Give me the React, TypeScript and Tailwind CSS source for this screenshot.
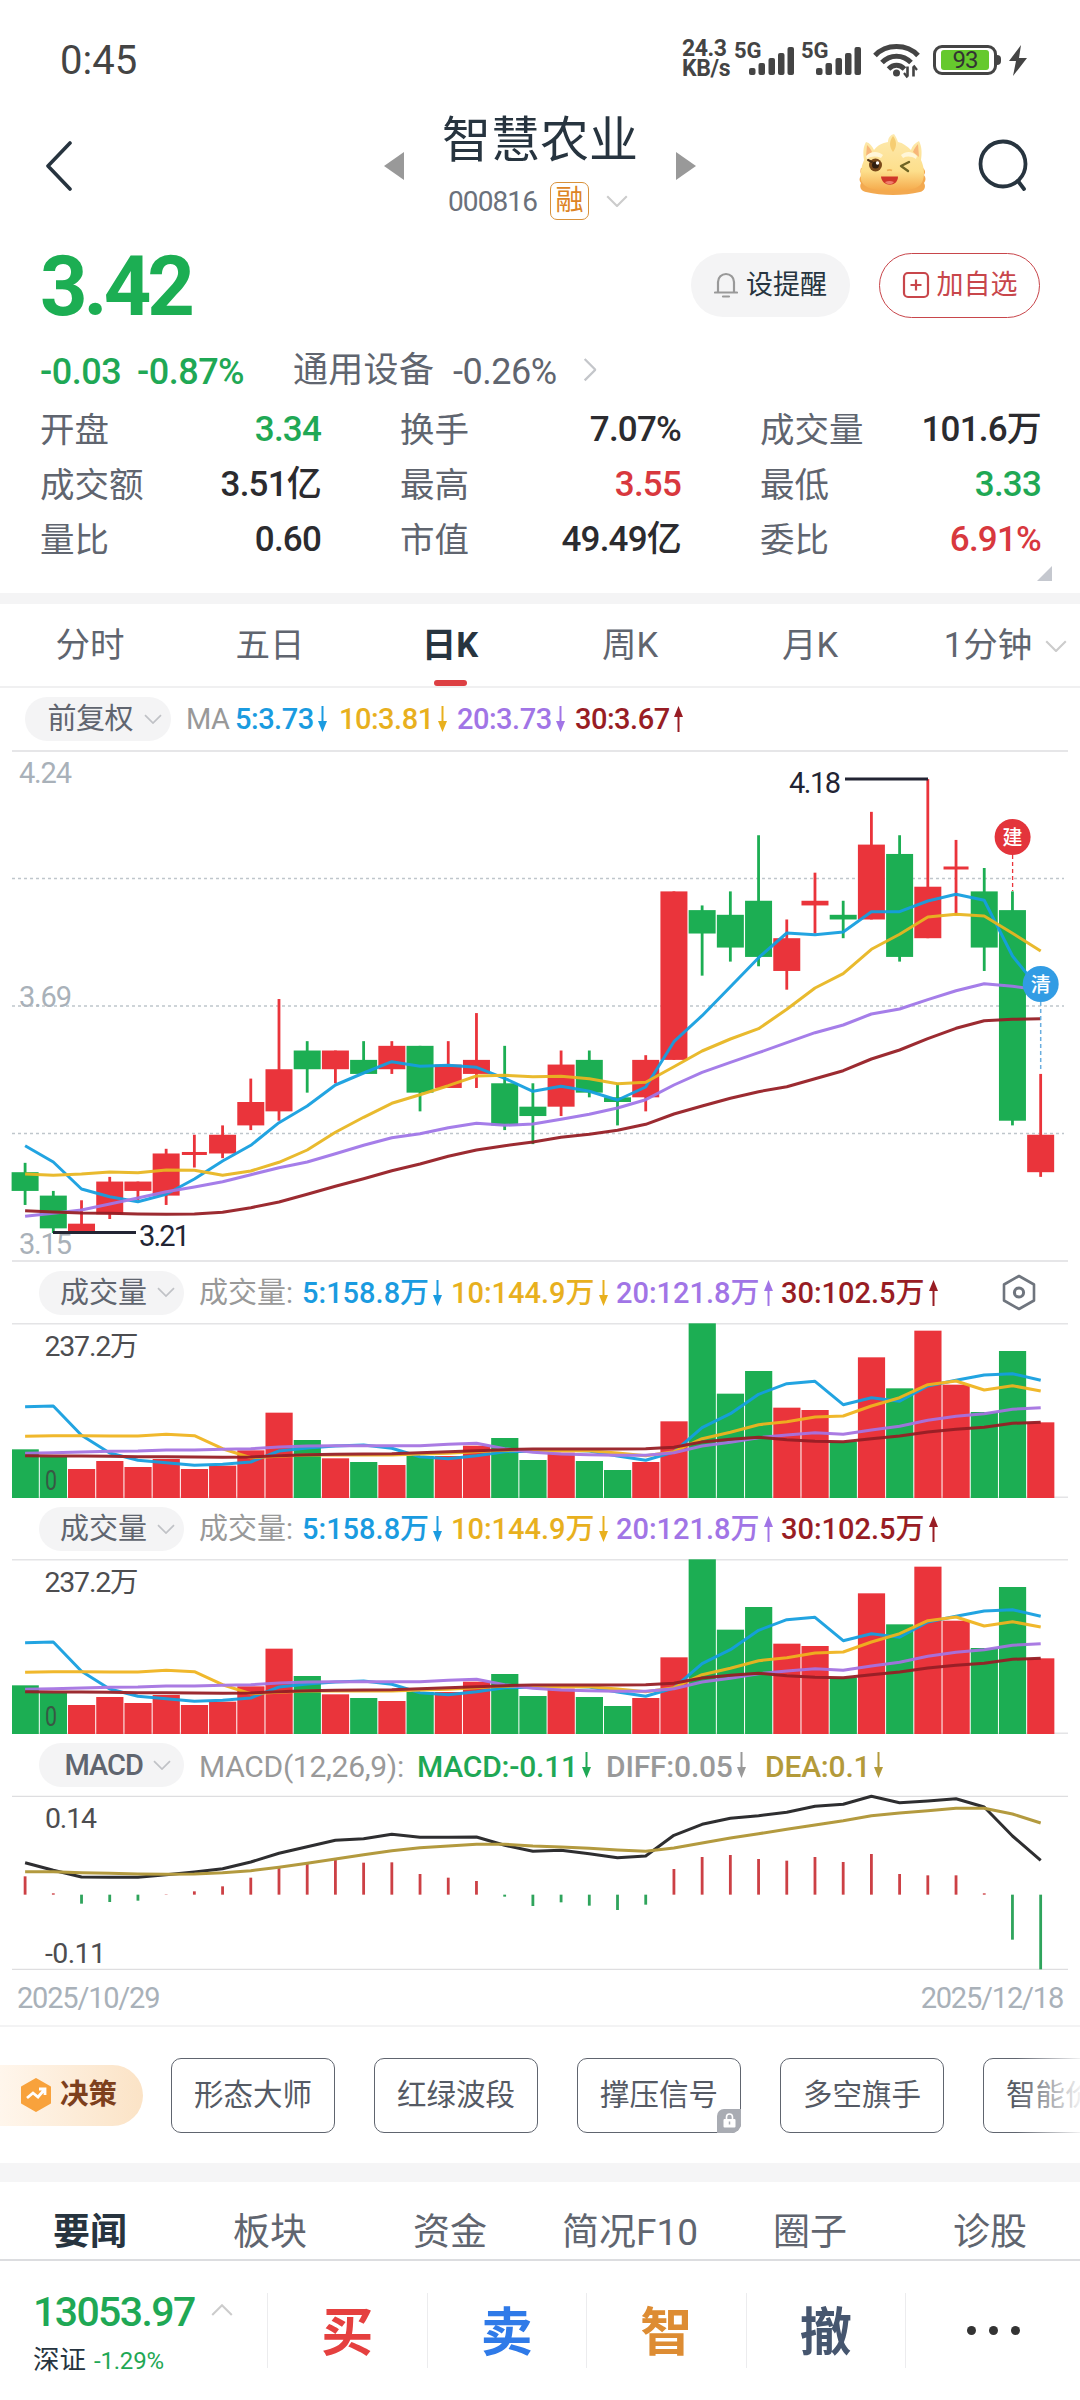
import { FC, ReactNode } from "react";

interface Candle {
  open: number;
  high: number;
  low: number;
  close: number;
}

interface LegendItem {
  text: string;
  dir: "up" | "down";
  className: string;
}

const RED = "#ea343b";
const GREEN = "#1cae53";
const STEP = 28.21;
const BODY = 27;

// x of the middle of the n-th candle, relative to the chart's left edge
const cx = (i: number) => 13.1 + i * STEP;
const toPoints = (ys: number[]) => ys.map((y, i) => `${cx(i).toFixed(1)},${(y / 3).toFixed(1)}`).join(" ");

// open, high, low, close
const rows: number[][] = [
  [3.34, 3.36, 3.27, 3.3],
  [3.29, 3.3, 3.21, 3.22],
  [3.21, 3.28, 3.21, 3.23],
  [3.25, 3.33, 3.24, 3.32],
  [3.3, 3.32, 3.28, 3.32],
  [3.29, 3.39, 3.27, 3.38],
  [3.38, 3.42, 3.35, 3.38],
  [3.38, 3.44, 3.37, 3.42],
  [3.44, 3.54, 3.43, 3.49],
  [3.47, 3.71, 3.45, 3.56],
  [3.6, 3.62, 3.51, 3.56],
  [3.56, 3.6, 3.53, 3.6],
  [3.58, 3.62, 3.55, 3.55],
  [3.56, 3.62, 3.55, 3.61],
  [3.61, 3.61, 3.47, 3.51],
  [3.52, 3.62, 3.52, 3.57],
  [3.55, 3.68, 3.52, 3.58],
  [3.53, 3.61, 3.43, 3.44],
  [3.48, 3.53, 3.4, 3.46],
  [3.48, 3.6, 3.46, 3.57],
  [3.58, 3.6, 3.5, 3.51],
  [3.5, 3.53, 3.44, 3.49],
  [3.5, 3.59, 3.47, 3.58],
  [3.58, 3.94, 3.58, 3.94],
  [3.9, 3.91, 3.76, 3.85],
  [3.89, 3.94, 3.79, 3.82],
  [3.92, 4.06, 3.78, 3.8],
  [3.77, 3.88, 3.73, 3.84],
  [3.91, 3.98, 3.85, 3.92],
  [3.89, 3.92, 3.84, 3.88],
  [3.88, 4.11, 3.88, 4.04],
  [4.02, 4.06, 3.79, 3.8],
  [3.84, 4.18, 3.84, 3.95],
  [3.99, 4.05, 3.89, 3.99],
  [3.94, 3.99, 3.77, 3.82],
  [3.9, 3.94, 3.44, 3.45],
  [3.34, 3.55, 3.33, 3.42],
];
const candles: Candle[] = rows.map(([open, high, low, close]) => ({ open, high, low, close }));
const isUp = (c: Candle) => c.close >= c.open;
const priceY = (p: number) => 1 + (4.24 - p) * 468;

// line series are kept in thirds of a pixel
const ma5 = [1187, 1236, 1317, 1340, 1355, 1333, 1287, 1233, 1186, 1118, 1068, 1005, 969, 935, 949, 946, 952, 985, 1024, 1009, 1024, 1050, 1011, 875, 797, 710, 623, 549, 554, 546, 485, 485, 453, 433, 451, 618, 722];
const ma10 = [1272, 1276, 1272, 1266, 1268, 1260, 1261, 1276, 1263, 1237, 1200, 1147, 1102, 1060, 1034, 1007, 978, 976, 980, 979, 986, 1001, 997, 950, 903, 867, 836, 778, 714, 671, 598, 553, 501, 493, 498, 550, 603];
const ma20 = [1399, 1390, 1380, 1362, 1344, 1325, 1311, 1295, 1274, 1253, 1236, 1211, 1186, 1163, 1151, 1133, 1120, 1126, 1122, 1108, 1093, 1074, 1049, 1005, 967, 937, 908, 878, 848, 825, 792, 777, 749, 722, 701, 709, 720];
const ma30 = [1382, 1386, 1389, 1390, 1392, 1393, 1392, 1387, 1373, 1356, 1333, 1309, 1286, 1262, 1242, 1219, 1200, 1187, 1176, 1162, 1153, 1141, 1123, 1092, 1068, 1045, 1025, 1010, 986, 962, 927, 900, 866, 835, 812, 808, 806];

const volTop = [598, 621, 657, 633, 651, 627, 657, 647, 601, 488, 570, 625, 636, 645, 618, 618, 587, 564, 630, 608, 633, 660, 636, 514, 220, 431, 363, 473, 480, 575, 322, 415, 242, 404, 486, 303, 517];
const vol5 = [470, 468, 556, 609, 631, 638, 646, 643, 636, 603, 594, 588, 585, 595, 620, 626, 617, 605, 604, 600, 603, 618, 631, 606, 533, 491, 433, 401, 394, 464, 443, 454, 408, 391, 375, 371, 391];
const vol10 = [559, 557, 557, 558, 558, 553, 557, 596, 623, 619, 615, 615, 615, 615, 612, 610, 605, 600, 603, 602, 602, 609, 617, 605, 566, 547, 524, 515, 501, 498, 468, 443, 404, 393, 420, 407, 423];
const vol20 = [610, 608, 606, 604, 603, 600, 600, 598, 596, 591, 588, 587, 587, 587, 587, 583, 580, 596, 607, 612, 614, 616, 616, 608, 588, 577, 563, 555, 548, 553, 540, 529, 511, 499, 491, 478, 473];
const vol30 = [617, 618, 618, 619, 620, 620, 621, 622, 621, 617, 614, 613, 612, 611, 608, 605, 602, 599, 597, 597, 597, 597, 596, 592, 576, 568, 562, 569, 574, 575, 566, 558, 546, 538, 532, 520, 517];

const macd = [409, 460, 491, 486, 482, 463, 454, 439, 413, 384, 372, 358, 368, 367, 402, 413, 423, 470, 498, 487, 497, 510, 494, 387, 351, 345, 357, 362, 351, 366, 342, 402, 406, 406, 460, 599, 688];
const diff = [368, 391, 411, 412, 412, 404, 396, 386, 366, 340, 320, 301, 296, 283, 292, 292, 291, 316, 334, 331, 341, 353, 348, 286, 253, 235, 227, 217, 199, 193, 169, 188, 183, 176, 201, 288, 361];
const dea = [395, 395, 398, 400, 402, 403, 402, 398, 392, 382, 370, 357, 344, 332, 323, 318, 313, 313, 318, 321, 325, 330, 334, 324, 309, 294, 281, 268, 255, 242, 227, 219, 212, 205, 205, 222, 249];

const stats = [
  { label: "开盘", value: "3.34", color: "text-[#1fa855]" },
  { label: "换手", value: "7.07%", color: "text-[#2b2b2f]" },
  { label: "成交量", value: "101.6万", color: "text-[#2b2b2f]" },
  { label: "成交额", value: "3.51亿", color: "text-[#2b2b2f]" },
  { label: "最高", value: "3.55", color: "text-[#d8383e]" },
  { label: "最低", value: "3.33", color: "text-[#1fa855]" },
  { label: "量比", value: "0.60", color: "text-[#2b2b2f]" },
  { label: "市值", value: "49.49亿", color: "text-[#2b2b2f]" },
  { label: "委比", value: "6.91%", color: "text-[#d8383e]" },
];

const maLegend: LegendItem[] = [
  { text: "5:3.73", dir: "down", className: "w-[104px] text-[#1a9be0]" },
  { text: "10:3.81", dir: "down", className: "w-[118px] text-[#e8b01e]" },
  { text: "20:3.73", dir: "down", className: "w-[118px] text-[#a175e6]" },
  { text: "30:3.67", dir: "up", className: "text-[#981d24]" },
];

const volLegend: LegendItem[] = [
  { text: "5:158.8万", dir: "down", className: "w-[149px] text-[#1a9be0]" },
  { text: "10:144.9万", dir: "down", className: "w-[165px] text-[#e8b01e]" },
  { text: "20:121.8万", dir: "up", className: "w-[165px] text-[#a175e6]" },
  { text: "30:102.5万", dir: "up", className: "text-[#981d24]" },
];

const macdLegend: LegendItem[] = [
  { text: "MACD:-0.11", dir: "down", className: "w-[189px] text-[#1fa855]" },
  { text: "DIFF:0.05", dir: "down", className: "w-[159px] text-[#999999]" },
  { text: "DEA:0.1", dir: "down", className: "text-[#b39a3a]" },
];

const Chevron: FC<{ className?: string; up?: boolean; w?: number }> = ({ className = "", up, w = 18 }) => (
  <svg width={w} height={w * 0.56} viewBox="0 0 18 10" fill="none" className={className}>
    <path d={up ? "M1 9 9 1l8 8" : "M1 1l8 8 8-8"} stroke="currentColor" strokeWidth="1.7" />
  </svg>
);

const Arrow: FC<{ dir: "up" | "down" }> = ({ dir }) => (
  <svg width="9" height="26" viewBox="0 0 9 26" className={`-mt-[2px] ${dir === "up" ? "" : "rotate-180"}`}>
    <path d="M4.5 0 9 11H0z" fill="currentColor" />
    <path d="M4.5 8v18" stroke="currentColor" strokeWidth="2" />
  </svg>
);

const Legend: FC<{ items: LegendItem[] }> = ({ items }) => (
  <>
    {items.map((item) => (
      <span key={item.text} className={`flex shrink-0 items-center gap-1 pt-[2px] font-medium ${item.className}`}>
        {item.text}
        <Arrow dir={item.dir} />
      </span>
    ))}
  </>
);

const Line: FC<{ ys: number[]; color: string }> = ({ ys, color }) => (
  <polyline points={toPoints(ys)} fill="none" stroke={color} strokeWidth="3" strokeLinejoin="round" />
);

const SignalBars = () => (
  <svg width="46" height="28" viewBox="0 0 46 28" fill="#444">
    <rect x="0" y="21" width="6.500" height="7" rx="2" />
    <rect x="9.500" y="16" width="6.500" height="12" rx="2" />
    <rect x="19.500" y="11" width="6.500" height="17" rx="2" />
    <rect x="29" y="6" width="6.500" height="22" rx="2" />
    <rect x="38.500" y="0" width="6.500" height="28" rx="2" />
  </svg>
);

const StatusBar = () => (
  <div className="flex h-[100px] items-start text-[#444]">
    <div className="ml-[60px] mt-[38px] text-[40px] leading-[46px]">0:45</div>
    <div className="ml-auto mt-[40px] flex w-[52px] flex-col gap-[2px] text-[23px] font-bold leading-[18px] tracking-[-0.4px]">
      <span>24.3</span>
      <span>KB/s</span>
    </div>
    {[0, 1].map((n) => (
      <div key={n} className="mt-[40px] flex h-[35px] w-[67px] items-end">
        <span className="self-start text-[22px] font-bold leading-[22px]">5G</span>
        <div className="-ml-[13px] shrink-0">
          <SignalBars />
        </div>
      </div>
    ))}
    <svg width="47" height="36" viewBox="0 0 47 36" fill="none" className="ml-[5px] mt-[43px]" stroke="#444" strokeWidth="5">
      <path d="M2 12.500C13 .5 34 .5 45 12.500" />
      <path d="M9 19.500c8-8.500 21-8.500 29 0" />
      <path d="M15.500 26c5-5 11-5 16 0" />
      <circle cx="23.500" cy="30" r="3.500" fill="#444" stroke="none" />
      <path d="M34.500 33.500v-10m6 0v10" strokeWidth="2.600" />
      <path d="M31 30l3.500 4.500M44 27l-3.500-4.500" strokeWidth="2.200" />
    </svg>
    <div className="ml-[13px] mt-[45px] flex h-[30px] w-[64px] items-center justify-center rounded-[9px] border-[3px] border-[#444] p-[2px]">
      <div className="flex h-full w-[48px] items-center justify-center rounded-[3px] bg-[#66c92d] text-[24px] leading-none tracking-[-1px] text-[#333]">93</div>
    </div>
    <div className="mt-[55px] h-[10px] w-[4px] rounded-r bg-[#444]" />
    <svg width="18" height="31" viewBox="0 0 18 31" className="ml-[8px] mr-[53px] mt-[45px]" fill="#444">
      <path d="M12 0 0 16h7L4 31l14-18h-8z" />
    </svg>
  </div>
);

const Mascot = () => (
  <svg width="67" height="62" viewBox="0 0 67 62">
    <defs>
      <linearGradient id="fur" x1="0" y1="0" x2="0" y2="1">
        <stop offset="0" stopColor="#fdeab0" />
        <stop offset="0.65" stopColor="#fddf8c" />
        <stop offset="1" stopColor="#f5a94a" />
      </linearGradient>
    </defs>
    <path d="M2 34c-1 3-1 5 1 7-3 3-3 5-1 8-2 4 0 8 5 9 16 4 38 4 54 0 5-1 6-6 4-9 2-3 2-5 0-8 2-3 1-5-1-7z" fill="#f3a94f" />
    <path d="M5 26C4 19 4 13 7 8c4 1 6 4 8 8 4-5 8-7 14-8 0-4 2-7 6-8 2 3 3 5 4 8 5 1 9 4 13 8 1-4 4-7 8-9 3 6 3 12 2 19 3 7 4 14 2 20-2 7-9 11-30 11S4 53 2 46c-1-6 0-13 3-20z" fill="url(#fur)" />
    <path d="M8 11c2 2 4 4 5 7l-6 5zM59 10c-2 2-4 5-5 8l6 5z" fill="#f7b679" />
    <path d="M34 2c4 5 4 11 0 16-4-5-4-11 0-16z" fill="#f6cd72" />
    <path d="M7 22c5-5 12-5 17-1l-2 3c-5-2-10-2-14 1zM42 21c5-4 11-4 16 1l-1 3c-5-3-9-3-13-1z" fill="#fff6d8" />
    <ellipse cx="16.500" cy="31" rx="6.500" ry="6.500" fill="#7a4a1b" />
    <circle cx="16.500" cy="31" r="3.500" fill="#2f1d10" />
    <circle cx="18.500" cy="29" r="1.700" fill="#fff" />
    <path d="M9 26l4 2" stroke="#4b2e14" strokeWidth="2" strokeLinecap="round" />
    <path d="m50 28-8 4 7 5" fill="none" stroke="#6f6424" strokeWidth="2.400" strokeLinecap="round" strokeLinejoin="round" />
    <path d="M22 42.500h17c0 11-16 11-17 0z" fill="#cf3629" />
    <path d="M26 48c3-1.500 6-1.500 9 0-2 3-7 3-9 0z" fill="#ef7f6b" />
    <path d="M28 36.500c2-1 3-1 5 0" stroke="#eeb25a" strokeWidth="1.600" fill="none" />
  </svg>
);

const Header = () => (
  <div className="grid h-[140px] grid-cols-[1fr_auto_1fr]">
    <svg width="28" height="50" viewBox="0 0 28 50" className="ml-[45px] mt-[41px]" fill="none">
      <path d="M25 2 3 25l22 23" stroke="#27343f" strokeWidth="3.600" strokeLinecap="round" strokeLinejoin="round" />
    </svg>
    <div className="flex gap-[38px]">
      <svg width="20" height="28" viewBox="0 0 20 28" className="mt-[52px]">
        <path d="M20 0v28L0 14z" fill="#999" />
      </svg>
      <div className="flex w-[196px] flex-col items-center">
        <h1 className="mt-[11px] whitespace-nowrap text-[49px] leading-[60px] text-[#27343f]">智慧农业</h1>
        <div className="mt-[11px] flex h-[38px] items-center self-start pl-[6px]">
          <span className="w-[89px] pt-[2px] text-[28px] tracking-[-0.9px] text-[#6b717b]">000816</span>
          <span className="ml-[13px] flex h-[38px] w-[39px] items-center justify-center rounded-[7px] border-[1.5px] border-[#d9913a] text-[28px] leading-none text-[#dd8424]">融</span>
          <Chevron w={22} className="ml-[17px] shrink-0 text-[#ccc]" />
        </div>
      </div>
      <svg width="20" height="28" viewBox="0 0 20 28" className="mt-[52px]">
        <path d="M0 0v28l20-14z" fill="#999" />
      </svg>
    </div>
    <div className="flex justify-end gap-[52px] pr-[52px]">
      <div className="mt-[34px]">
        <Mascot />
      </div>
      <svg width="50" height="54" viewBox="0 0 50 54" className="mt-[39px]" fill="none" stroke="#27343f" strokeWidth="3.800" strokeLinecap="round">
        <circle cx="25" cy="25" r="22.500" />
        <path d="m40 42 6 8" />
      </svg>
    </div>
  </div>
);

const Quote = () => (
  <section className="px-10">
    <div className="flex h-[90px] items-center">
      <span className="mr-auto pt-[3px] text-[83px] font-bold leading-none tracking-[-4px] text-[#1cae53]">3.42</span>
      <button className="flex h-[64px] w-[159px] items-center justify-center gap-[8px] rounded-full bg-[#f4f4f5] text-[27px] text-[#27343f]">
        <svg width="24" height="28" viewBox="0 0 24 28" fill="none" stroke="#999" strokeWidth="2.200">
          <path d="M4 21V11a8 8 0 0 1 16 0v10M1 21.500h22M9 25.500h6" strokeLinecap="round" />
        </svg>
        <span className="pt-px">设提醒</span>
      </button>
      <button className="ml-[29px] flex h-[65px] w-[161px] items-center justify-center gap-[7px] rounded-full border-[1.5px] border-[#c8464b] text-[27px] text-[#c8464b]">
        <svg width="28" height="28" viewBox="0 0 28 28" fill="none" stroke="#c8464b" strokeWidth="2.200">
          <rect x="2" y="2" width="24" height="24" rx="4" />
          <path d="M14 8.500v11M8.500 14h11" />
        </svg>
        <span className="pt-px">加自选</span>
      </button>
    </div>
    <div className="flex h-[69px] items-center pt-[14px] text-[36px] tracking-[-0.500px]">
      <span className="w-[97px] font-medium text-[#1fa855]">-0.03</span>
      <span className="w-[156px] font-medium text-[#1fa855]">-0.87%</span>
      <span className="w-[160px] text-[35px] tracking-[0.3px] text-[#60656f]">通用设备</span>
      <span className="w-[130px] text-[#60656f]">-0.26%</span>
      <Chevron w={24} className="-ml-[5px] -mt-[3px] -rotate-90 text-[#c4c6ca]" />
    </div>
    <div className="grid grid-cols-[281px_281px_281px] gap-x-[79px] pt-[4px]">
      {stats.map((s) => (
        <div key={s.label} className="flex h-[55px] items-center justify-between">
          <span className="text-[34.500px] text-[#60656f]">{s.label}</span>
          <span className={`text-[35px] font-medium tracking-[-0.8px] ${s.color}`}>{s.value}</span>
        </div>
      ))}
    </div>
    <svg width="15" height="15" viewBox="0 0 15 15" className="-mr-[12px] -mt-[2px] ml-auto">
      <path d="M15 0v15H0z" fill="#c5c8cf" />
    </svg>
  </section>
);

const PeriodTabs = () => (
  <nav className="grid h-[84px] grid-cols-6 border-b-2 border-[#f0f0f1] text-[34.500px] text-[#60656f]">
    {["分时", "五日", "日K", "周K", "月K", "1分钟"].map((t) => (
      <div key={t} className="relative flex items-center justify-center gap-[13px] whitespace-nowrap pt-[2px]">
        {t === "日K" ? <b className="text-[#27343f]">{t}</b> : t}
        {t === "日K" && <i className="absolute bottom-0 h-[6px] w-[33px] rounded-full bg-[#dd4043]" />}
        {t === "1分钟" && <Chevron w={22} className="-mr-[31px] text-[#ccc]" />}
      </div>
    ))}
  </nav>
);

const Pill: FC<{ children: ReactNode; className: string }> = ({ children, className }) => (
  <div className={`flex h-[44px] shrink-0 items-center justify-end gap-[10px] rounded-full bg-[#f4f4f5] pr-[9px] text-[29px] text-[#60656f] ${className}`}>
    <span className="pt-[2px]">{children}</span>
    <Chevron className="text-[#c0c2c6]" />
  </div>
);

const PriceChart = () => (
  <svg width="1056" height="512" viewBox="0 0 1056 512" className="mx-3 block overflow-visible font-[Roboto,'Noto_Sans_CJK_SC',sans-serif]">
    <path d="M0 1h1056M0 511h1056" stroke="#e6e6e8" strokeWidth="2" />
    <path d="M0 128.500h1052M0 256h1052M0 383.500h1052" stroke="#bfc6cc" strokeWidth="1.300" strokeDasharray="3 3" />
    <g fill="#a9b1b9" fontSize="29">
      <text x="7" y="33" textLength="53">4.24</text>
      <text x="7" y="256.500" textLength="53">3.69</text>
      <text x="7" y="504" textLength="53">3.15</text>
    </g>
    {candles.map((c, i) => {
      const top = priceY(Math.max(c.open, c.close));
      const bottom = priceY(Math.min(c.open, c.close));
      const color = isUp(c) ? RED : GREEN;
      return (
        <g key={i} fill={color}>
          <rect x={cx(i) - 1.4} y={priceY(c.high)} width="2.800" height={priceY(c.low) - priceY(c.high)} />
          {top === bottom ? (
            <rect x={cx(i) - 12.5} y={top - 1.5} width="25" height="3" />
          ) : (
            <rect x={cx(i) - BODY / 2} y={top} width={BODY} height={bottom - top} />
          )}
        </g>
      );
    })}
    <g opacity="0.94">
      <Line ys={ma5} color="#159fe0" />
      <Line ys={ma10} color="#e8b621" />
      <Line ys={ma20} color="#a076e8" />
      <Line ys={ma30} color="#961e25" />
    </g>
    <path d="M41 482.500h83M833 29h83" stroke="#222433" strokeWidth="2.800" />
    <g fill="#222433" fontSize="29">
      <text x="127" y="495.500" textLength="51">3.21</text>
      <text x="777" y="42.500" textLength="52">4.18</text>
    </g>
    <path d="M1000.600 105v36" stroke={RED} strokeWidth="1.300" strokeDasharray="4 3" />
    <path d="M1028.700 252v69" stroke="#6aaede" strokeWidth="1.500" strokeDasharray="4 3" />
    <circle cx="1000.600" cy="87" r="18" fill="#e3343b" />
    <circle cx="1028.700" cy="234" r="18" fill="#329ce4" />
    <g fill="#fff" fontSize="20" fontWeight="500" textAnchor="middle">
      <text x="1000.600" y="94.500">建</text>
      <text x="1028.700" y="241.500">清</text>
    </g>
  </svg>
);

const VolumePanel: FC<{ gear?: boolean; headClass: string }> = ({ gear, headClass }) => (
  <section>
    <div className={`flex items-center pl-[39px] text-[29px] ${headClass}`}>
      <Pill className="w-[145px]">成交量</Pill>
      <span className="w-[118px] shrink-0 whitespace-nowrap pl-[15px] pt-[2px] text-[#999]">成交量:</span>
      <span className="flex shrink-0">
        <Legend items={volLegend} />
      </span>
      {gear && (
        <svg width="34" height="37" viewBox="0 0 34 37" className="ml-auto mr-[44px]" fill="none" stroke="#6f757e" strokeWidth="2.600">
          <path d="M17 2 32 10.500v16L17 35 2 26.500v-16z" strokeLinejoin="round" />
          <circle cx="17" cy="18.500" r="4.600" strokeWidth="3" />
        </svg>
      )}
    </div>
    <svg width="1056" height="176" viewBox="0 73 1056 176" className="mx-3 block font-[Roboto,'Noto_Sans_CJK_SC',sans-serif]">
      <path d="M0 73.700h1056M0 247.300h1056" stroke="#e4e4e6" strokeWidth="1.500" />
      {volTop.map((v, i) => (
        <rect key={i} x={cx(i) - 13.5} y={v / 3} width="27.200" height={(744 - v) / 3} fill={isUp(candles[i]) ? RED : GREEN} />
      ))}
      <text x="32.500" y="106" fontSize="28.500" fill="#4d4d50" textLength="94">237.2万</text>
      <text x="33" y="240" fontSize="28" textLength="12" fill="#3d4a42" opacity="0.85" lengthAdjust="spacingAndGlyphs">0</text>
      <g opacity="0.94">
        <Line ys={vol5} color="#159fe0" />
        <Line ys={vol10} color="#f0b41f" />
        <Line ys={vol20} color="#a573e2" />
        <Line ys={vol30} color="#961e25" />
      </g>
    </svg>
  </section>
);

const MacdPanel = () => (
  <section>
    <div className="flex h-[60px] items-center pl-[39px] text-[30px]">
      <Pill className="w-[145px] pr-[13px] font-medium tracking-[-1px]">MACD</Pill>
      <span className="w-[219px] shrink-0 pl-[15px] pt-[2px] tracking-[-0.300px] text-[#999]">MACD(12,26,9):</span>
      <span className="ml-[14px] flex tracking-[-0.200px]">
        <Legend items={macdLegend} />
      </span>
    </div>
    <svg width="1056" height="176" viewBox="0 55 1056 176" className="mx-3 block overflow-visible font-[Roboto,'Noto_Sans_CJK_SC',sans-serif]">
      <path d="M0 56.300h1056M0 229.300h1056" stroke="#dedee0" strokeWidth="1.300" />
      <g fill="#4d4d50" fontSize="28.500">
        <text x="33" y="88" textLength="52">0.14</text>
        <text x="33" y="223" textLength="61">-0.11</text>
      </g>
      {macd.map((v, i) => (
        <rect key={i} x={cx(i) - 1.4} y={Math.min(v, 464) / 3} width="2.800" height={Math.abs(v - 464) / 3} fill={v < 464 ? "#cc4045" : "#2fa45c"} />
      ))}
      <Line ys={diff} color="#2e2e30" />
      <Line ys={dea} color="#b39a3f" />
    </svg>
    <div className="mx-[17px] flex h-[54px] items-center justify-between pt-[2px] text-[29px] tracking-[-1.200px] text-[#a9b1b9]">
      <span>2025/10/29</span>
      <span>2025/12/18</span>
    </div>
  </section>
);

const Tools = () => (
  <section className="flex h-[138px] items-center overflow-hidden border-t-2 border-[#f3f3f4]">
    <div className="flex h-[61px] w-[143px] shrink-0 items-center gap-[8px] rounded-r-full bg-linear-to-r from-[#fff6ec] to-[#fbe3c6] pl-[20px] text-[28.500px] font-bold text-[#7d401d]">
      <svg width="32" height="34" viewBox="0 0 32 34">
        <path d="M16 1 30 9v16L16 33 2 25V9z" fill="#f8a23c" stroke="#f8a23c" strokeWidth="2" strokeLinejoin="round" />
        <path d="m7 20 6-5 5 4 7-8m-6 0h6v6" fill="none" stroke="#fff" strokeWidth="2.800" />
      </svg>
      决策
    </div>
    <div className="ml-[28px] flex gap-[39px]">
      {["形态大师", "红绿波段", "撑压信号", "多空旗手", "智能价值"].map((t) => (
        <div key={t} className="relative flex h-[75px] w-[164px] shrink-0 items-center justify-center rounded-[10px] border-[1.5px] border-[#60656f] text-[29.500px] text-[#555a64]">
          {t}
          {t === "撑压信号" && (
            <span className="absolute -bottom-px -right-px flex h-[24px] w-[24px] items-center justify-center rounded-br-[9px] rounded-tl-[7px] bg-[#a9acb3]">
              <svg width="13" height="15" viewBox="0 0 13 15">
                <rect x="0.500" y="6" width="12" height="8.500" rx="1" fill="#fff" />
                <path d="M3.500 6V4a3 3 0 0 1 6 0v2" fill="none" stroke="#fff" strokeWidth="1.600" />
                <path d="M6.500 8.500v3" stroke="#a9acb3" strokeWidth="1.500" />
              </svg>
            </span>
          )}
        </div>
      ))}
    </div>
    {/* fades the last button out at the screen edge */}
    <div className="relative -ml-[131px] h-full w-[70px] shrink-0 bg-linear-to-r from-transparent to-white" />
  </section>
);

const trade = [
  { t: "买", c: "text-[#e5403f]" },
  { t: "卖", c: "text-[#2f7ae8]" },
  { t: "智", c: "text-[#dd8c33]" },
  { t: "撤", c: "text-[#46566f]" },
];

const BottomBar = () => (
  <footer className="flex h-[138px] items-start">
    <div className="w-[267px] pl-[33px] pt-[26px]">
      <div className="flex items-center gap-[15px]">
        <span className="w-[163px] text-[41px] font-medium leading-[50px] tracking-[-1.600px] text-[#1fa855]">13053.97</span>
        <Chevron w={22} up className="-mt-[3px] text-[#ccc]" />
      </div>
      <div className="-mt-[2px] flex items-baseline gap-[8px] text-[26.500px] leading-[50px] text-[#27343f]">
        深证
        <span className="text-[24px] tracking-[-0.200px] text-[#1fa855]">-1.29%</span>
      </div>
    </div>
    {trade.map((b) => (
      <button key={b.t} className={`mt-[32px] flex h-[75px] w-[159.500px] items-center justify-center border-l border-[#ececee] pt-[6px] text-[52px] font-bold leading-none ${b.c}`}>
        {b.t}
      </button>
    ))}
    <div className="mt-[32px] flex h-[75px] grow items-center justify-center gap-[13px] border-l border-[#ececee]">
      {[0, 1, 2].map((n) => (
        <i key={n} className="size-[9px] rounded-full bg-[#333]" />
      ))}
    </div>
  </footer>
);

const App: FC = () => {
  return (
    <div className="h-[2400px] w-[1080px] overflow-hidden bg-white font-[Roboto,'Noto_Sans_CJK_SC',sans-serif]">
      <StatusBar />
      <Header />
      <Quote />
      <div className="mt-[12px] h-[11px] bg-[#f4f4f5]" />
      <PeriodTabs />
      <div className="flex h-[62px] items-center pl-[25px] text-[29px] tracking-[-0.500px]">
        <Pill className="w-[146px] gap-[11px] pr-[8px]">前复权</Pill>
        <span className="w-[64px] pl-[15px] pt-[2px] text-[#999]">MA</span>
        <Legend items={maLegend} />
      </div>
      <PriceChart />
      <VolumePanel gear headClass="h-[61px]" />
      <VolumePanel headClass="h-[60px]" />
      <MacdPanel />
      <Tools />
      <div className="h-[19px] bg-[#f5f5f6]" />
      <nav className="grid h-[79px] grid-cols-6 items-center border-b-2 border-[#dcdde0] pt-[24px] text-[37px] text-[#60656f]">
        {["要闻", "板块", "资金", "简况F10", "圈子", "诊股"].map((t) => (
          <span key={t} className={`whitespace-nowrap text-center leading-[54px] ${t === "要闻" ? "font-bold text-[#27343f]" : ""}`}>
            {t}
          </span>
        ))}
      </nav>
      <BottomBar />
    </div>
  );
};

export default App;
